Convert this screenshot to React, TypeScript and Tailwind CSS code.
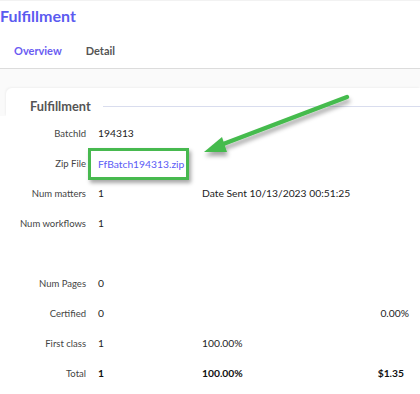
const font = { fontFamily: 'Lato, "Noto Sans", sans-serif' };

type Row = {
  label: string;
  value?: React.ReactNode;
  mid?: React.ReactNode;
  right?: React.ReactNode;
  bold?: boolean;
};

const rows: (Row | null)[] = [
  { label: 'BatchId', value: '194313' },
  {
    label: 'Zip File',
    value: (
      <span className="-ml-[10px] inline-block h-[32px] border-[3px] border-[#47b94f] pl-[7px] pr-[2px] leading-[26px] text-[#5b5bf6] shadow-[2px_3px_4px_rgba(0,0,0,0.35)]">
        FfBatch194313.zip
      </span>
    ),
  },
  { label: 'Num matters', value: '1', mid: 'Date Sent 10/13/2023 00:51:25' },
  { label: 'Num workflows', value: '1' },
  null,
  { label: 'Num Pages', value: '0' },
  { label: 'Certified', value: '0', right: '0.00%' },
  { label: 'First class', value: '1', mid: '100.00%' },
  { label: 'Total', value: '1', mid: '100.00%', right: <span className="pr-[5px]">$1.35</span>, bold: true },
];

function Arrow() {
  return (
    <svg className="pointer-events-none absolute left-0 top-0" width="420" height="394">
      <defs>
        <filter id="sh" x="-20%" y="-50%" width="140%" height="200%">
          <feDropShadow dx="1" dy="4" stdDeviation="2" floodColor="#000" floodOpacity="0.35" />
        </filter>
      </defs>
      <g filter="url(#sh)">
        <line x1="347" y1="97" x2="218" y2="146" stroke="#45bb4d" strokeWidth="4.5" strokeLinecap="round" />
        <polygon points="204,152 222,137 227,152" fill="#45bb4d" />
      </g>
    </svg>
  );
}

export default function App() {
  return (
    <div className="relative h-[394px] w-[420px] overflow-hidden bg-white" style={font}>
      <div className="border-t border-[#f2f2f2] pt-[4px]">
        <h1 className="text-[16px] font-bold leading-[22px] text-[#5b5bf0]">Fulfillment</h1>
      </div>
      <div className="mt-[16px] flex border-b border-[#dcdcdc] pb-[9px] text-[11px] font-bold leading-[16px]">
        <span className="ml-[14px] text-[#6a5cf2]">Overview</span>
        <span className="ml-[24px] text-[#555]">Detail</span>
      </div>
      <div className="bg-[#fafafa] pl-[6px] pt-[19px]">
        <div className="rounded-tl-[6px] bg-white shadow-[-1px_-1px_2px_rgba(0,0,0,0.04)]">
          <div className="flex items-center pl-[24px] pt-[9px]">
            <span className="text-[12.8px] font-bold text-[#555]">Fulfillment</span>
            <div className="ml-[12px] h-px flex-1 bg-[#d9ddee]" />
          </div>
        </div>
      </div>
      <div className="pt-[3px] text-[10.3px] text-[#222]">
        {rows.map((r, i) =>
          r === null ? (
            <div key={i} className="h-[30px]" />
          ) : (
            <div key={i} className={`flex h-[30px] items-center ${r.bold ? 'font-bold text-[#111]' : ''}`}>
              <span className="w-[86px] text-right text-[9.5px] font-normal text-[#444]">{r.label}</span>
              <span className="ml-[12px] w-[104px]">{r.value}</span>
              <span className="flex-1">{r.mid}</span>
              <span className="pr-[11px] text-right">{r.right}</span>
            </div>
          ),
        )}
      </div>
      <Arrow />
    </div>
  );
}
